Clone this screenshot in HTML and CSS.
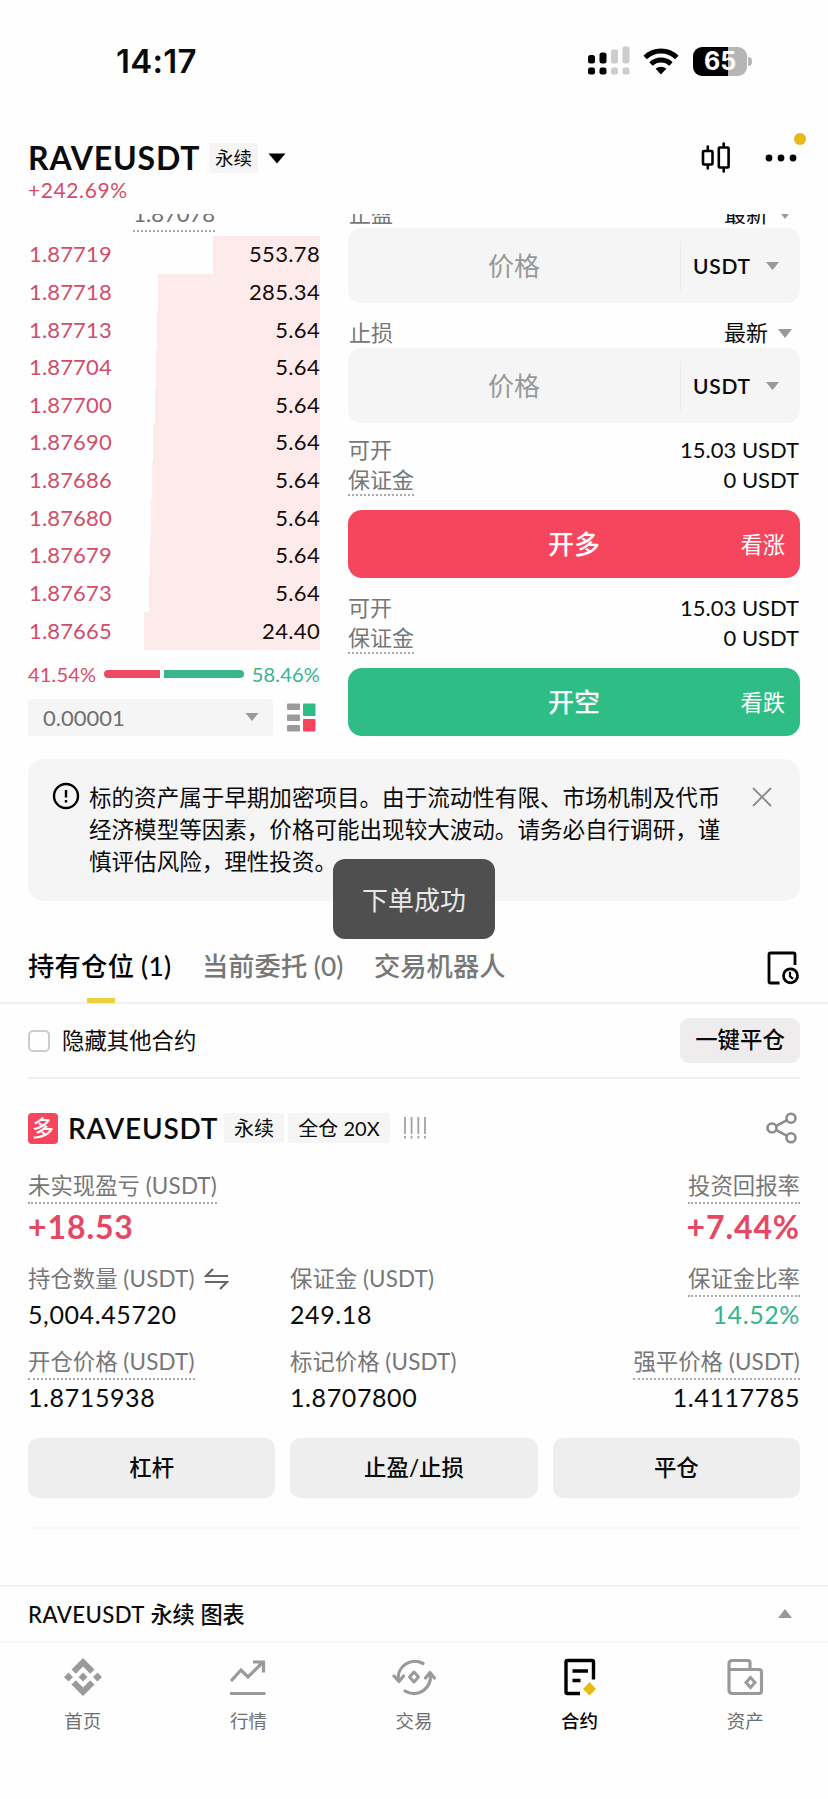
FILE: index.html
```
<!DOCTYPE html>
<html lang="zh-CN">
<head>
<meta charset="utf-8">
<title>RAVEUSDT 永续</title>
<link rel="stylesheet" href="styles.css">
</head>
<body>
<div class="screen">
  <div class="status">
    <span class="clock">14:17</span>
    <div class="status-icons">
      <svg class="signal" width="42" height="30" viewBox="0 0 42 30">
        <g fill="#000"><rect x="0" y="9" width="7" height="8.500" rx="2.500"/><rect x="11.500" y="6.500" width="7" height="11" rx="2.500"/><rect x="0" y="21.500" width="7" height="7" rx="2.200"/><rect x="11.500" y="21.500" width="7" height="7" rx="2.200"/></g>
        <g fill="#ccc"><rect x="23" y="3.500" width="7" height="14" rx="2"/><rect x="34.500" y="0.500" width="7" height="17" rx="2"/><rect x="23" y="21.500" width="7" height="7" rx="2.200"/><rect x="34.500" y="21.500" width="7" height="7" rx="2.200"/></g>
      </svg>
      <svg class="wifi" width="36" height="28" viewBox="0 0 36 28">
        <path d="M2.200 10.500A22.500 22.500 0 0 1 33.800 10.500" fill="none" stroke="#000" stroke-width="5"/>
        <path d="M8 17A14.500 14.500 0 0 1 28 17" fill="none" stroke="#000" stroke-width="4.800"/>
        <path d="M18 27.500L12.600 21.800A8 8 0 0 1 23.400 21.800Z" fill="#000"/>
      </svg>
      <div class="battery"><span class="level">65</span><i class="nub"></i></div>
    </div>
  </div>

  <header class="top">
    <div class="top-row">
      <h1 class="symbol">RAVEUSDT</h1>
      <span class="tag tag-top">永续</span>
      <svg class="top-caret" width="18" height="11" viewBox="0 0 18 11"><path d="M.5.5H17.500L9 10.500Z" fill="#000"/></svg>
      <svg class="candles" width="30" height="32" viewBox="0 0 30 32" fill="none" stroke="#000" stroke-width="2.600" stroke-linecap="round">
        <rect x="2" y="9" width="9.500" height="13.500" rx="1"/><path d="M6.800 4.500V8M6.800 23.500V26.500"/>
        <rect x="17.800" y="5.500" width="9.800" height="20" rx="1"/><path d="M22.700 1.500V4.500M22.700 26.500V29.500"/>
      </svg>
      <div class="more">
        <svg width="32" height="8" viewBox="0 0 32 8"><circle cx="4" cy="4" r="3.400"/><circle cx="16" cy="4" r="3.400"/><circle cx="28" cy="4" r="3.400"/></svg>
        <i class="dot"></i>
      </div>
    </div>
    <div class="change">+242.69%</div>
  </header>

  <main class="trade">
    <section class="book">
      <div class="mark-clip"><span class="mark">1.87078</span></div>
      <div class="asks">
        <div class="ask"><i class="depth" style="width:107px"></i><span>1.87719</span><b>553.78</b></div>
        <div class="ask"><i class="depth" style="width:162px"></i><span>1.87718</span><b>285.34</b></div>
        <div class="ask"><i class="depth" style="width:163px"></i><span>1.87713</span><b>5.64</b></div>
        <div class="ask"><i class="depth" style="width:164px"></i><span>1.87704</span><b>5.64</b></div>
        <div class="ask"><i class="depth" style="width:165px"></i><span>1.87700</span><b>5.64</b></div>
        <div class="ask"><i class="depth" style="width:167px"></i><span>1.87690</span><b>5.64</b></div>
        <div class="ask"><i class="depth" style="width:168px"></i><span>1.87686</span><b>5.64</b></div>
        <div class="ask"><i class="depth" style="width:169px"></i><span>1.87680</span><b>5.64</b></div>
        <div class="ask"><i class="depth" style="width:170px"></i><span>1.87679</span><b>5.64</b></div>
        <div class="ask"><i class="depth" style="width:171px"></i><span>1.87673</span><b>5.64</b></div>
        <div class="ask"><i class="depth" style="width:176px"></i><span>1.87665</span><b>24.40</b></div>
      </div>
      <div class="ratio">
        <span class="red">41.54%</span>
        <div class="ratio-bar"><i class="r" style="width:56px"></i><i class="g"></i></div>
        <span class="green">58.46%</span>
      </div>
      <div class="precision">
        <div class="step"><span>0.00001</span><svg width="14" height="8" viewBox="0 0 14 8"><path d="M.5 0H13.500L7 8Z" fill="#999"/></svg></div>
        <svg class="layout-icon" width="29" height="29" viewBox="0 0 29 29">
          <g fill="#9b9b9b"><rect x="0" y="0.500" width="13" height="6.500" rx="1"/><rect x="0" y="11.500" width="13" height="6.500" rx="1"/><rect x="0" y="22" width="13" height="6.500" rx="1"/></g>
          <rect x="16" y="0.500" width="12.500" height="12.500" rx="1" fill="#2ebd85"/><rect x="16" y="16" width="12.500" height="12.500" rx="1" fill="#f6465d"/>
        </svg>
      </div>
    </section>

    <section class="form">
      <div class="tp-clip"><div class="opt"><span class="lbl">止盈</span><span class="sel">最新</span><svg width="14" height="9" viewBox="0 0 14 9"><path d="M0 0H14L7 9Z" fill="#999"/></svg></div></div>
      <div class="field"><span class="ph">价格</span><span class="unit">USDT</span><svg width="13" height="8" viewBox="0 0 13 8"><path d="M0 0H13L6.500 8Z" fill="#999"/></svg></div>
      <div class="opt opt-sl"><span class="lbl">止损</span><span class="sel">最新</span><svg width="14" height="9" viewBox="0 0 14 9"><path d="M0 0H14L7 9Z" fill="#999"/></svg></div>
      <div class="field"><span class="ph">价格</span><span class="unit">USDT</span><svg width="13" height="8" viewBox="0 0 13 8"><path d="M0 0H13L6.500 8Z" fill="#999"/></svg></div>
      <div class="avail">
        <div class="line"><span>可开</span><b>15.03 USDT</b></div>
        <div class="line"><span class="dotted">保证金</span><b>0 USDT</b></div>
      </div>
      <div class="btn long"><span class="act">开多</span><span class="hint">看涨</span></div>
      <div class="avail avail-short">
        <div class="line"><span>可开</span><b>15.03 USDT</b></div>
        <div class="line"><span class="dotted">保证金</span><b>0 USDT</b></div>
      </div>
      <div class="btn short"><span class="act">开空</span><span class="hint">看跌</span></div>
    </section>
  </main>

  <div class="notice">
    <svg class="warn" width="28" height="28" viewBox="0 0 28 28" fill="none" stroke="#000"><circle cx="14" cy="14" r="12" stroke-width="2.400"/><path d="M14 8V15.500M14 18V20.500" stroke-width="2.400"/></svg>
    <p>标的资产属于早期加密项目。由于流动性有限、市场机制及代币<br>经济模型等因素，价格可能出现较大波动。请务必自行调研，谨<br>慎评估风险，理性投资。</p>
    <svg class="close" width="20" height="20" viewBox="0 0 20 20" fill="none" stroke="#8a8a8a" stroke-width="1.800"><path d="M1 1L19 19M19 1L1 19"/></svg>
    <div class="toast">下单成功</div>
  </div>

  <nav class="tabs">
    <span class="tab on">持有仓位 (1)</span>
    <span class="tab tab-orders">当前委托 (0)</span>
    <span class="tab tab-bots">交易机器人</span>
    <svg class="history" width="32" height="34" viewBox="0 0 32 34" fill="none" stroke="#000" stroke-width="2.800"><path d="M12.500 32H3.500Q2 32 2 30.500V3.500Q2 2 3.500 2H26.500Q28 2 28 3.500V14" /><circle cx="23.500" cy="24.800" r="7"/><path d="M23 20.800V25.300L26 27.800" stroke-width="2.200"/></svg>
  </nav>

  <div class="filter">
    <i class="check"></i><span class="filter-label">隐藏其他合约</span><span class="close-all">一键平仓</span>
  </div>

  <section class="position">
    <div class="pos-head">
      <span class="side">多</span>
      <h2>RAVEUSDT</h2>
      <span class="tag tag-perp">永续</span>
      <span class="tag tag-lev">全仓 20X</span>
      <svg class="risk" width="24" height="24" viewBox="0 0 24 24" stroke="#a3a3a3" stroke-width="1.800"><path d="M2 1V18M8.600 1V18M15.300 1V18M22 1V18M2 20V22.500M8.600 20V22.500M15.300 20V22.500M22 20V22.500"/></svg>
      <svg class="share" width="32" height="32" viewBox="0 0 32 32" fill="none" stroke="#8c8c8c" stroke-width="2.600"><circle cx="6" cy="16" r="4.500"/><circle cx="25" cy="6.200" r="4.500"/><circle cx="25" cy="25.800" r="4.500"/><path d="M10.300 13.800L20.700 8.400M10.300 18.200L20.700 23.600"/></svg>
    </div>
    <div class="grid pnl">
      <div><span class="k dotted">未实现盈亏 <em>(USDT)</em></span><strong>+18.53</strong></div>
      <div class="right"><span class="k dotted">投资回报率</span><strong>+7.44%</strong></div>
    </div>
    <div class="grid three">
      <div><span class="k">持仓数量 <em>(USDT)</em><svg class="swap" width="25" height="22" viewBox="0 0 25 22" fill="none" stroke="#666" stroke-width="2.200"><path d="M24 8H2L9 1M1 14H23L16 21"/></svg></span><span class="v">5,004.45720</span></div>
      <div><span class="k">保证金 <em>(USDT)</em></span><span class="v">249.18</span></div>
      <div class="right"><span class="k dotted">保证金比率</span><span class="v green">14.52%</span></div>
    </div>
    <div class="grid three last">
      <div><span class="k dotted">开仓价格 <em>(USDT)</em></span><span class="v">1.8715938</span></div>
      <div><span class="k">标记价格 <em>(USDT)</em></span><span class="v">1.8707800</span></div>
      <div class="right"><span class="k dotted">强平价格 <em>(USDT)</em></span><span class="v">1.4117785</span></div>
    </div>
    <div class="actions"><span>杠杆</span><span>止盈/止损</span><span>平仓</span></div>
  </section>

  <div class="chart-bar"><span><em>RAVEUSDT</em> 永续 图表</span><svg width="14" height="9" viewBox="0 0 14 9"><path d="M0 9H14L7 0Z" fill="#999"/></svg></div>

  <footer class="nav">
    <div class="item"><svg width="40" height="40" viewBox="0 0 40 40" fill="#9a9a9a"><path d="M20 1L31.500 12.500L27.200 16.800L20 9.600L12.800 16.800L8.500 12.500Z"/><path d="M20 39L31.500 27.500L27.200 23.200L20 30.400L12.800 23.200L8.500 27.500Z"/><path d="M20 15.500L24.500 20L20 24.500L15.500 20ZM5.500 15.500L10 20L5.500 24.500L1 20ZM34.500 15.500L39 20L34.500 24.500L30 20Z"/></svg><span>首页</span></div>
    <div class="item"><svg width="40" height="40" viewBox="0 0 40 40" fill="none" stroke="#9a9a9a" stroke-width="3.200"><path d="M3 24L13 13L20 20L34 6M25 5H35.500V15.500M2 36.500H37.500"/></svg><span>行情</span></div>
    <div class="item"><svg width="44" height="40" viewBox="0 0 44 40" fill="none" stroke="#9a9a9a" stroke-width="3.200" stroke-linecap="round" stroke-linejoin="round"><path d="M31 6.500A16.500 16.500 0 0 0 6.500 23.500M2 19L7 24.500L11.500 19M13 34A16.500 16.500 0 0 0 38 16.500M33.500 21L38 15.500L42.500 21"/><path d="M22 15L26.500 20L22 25L17.500 20Z" stroke-width="3"/></svg><span>交易</span></div>
    <div class="item on"><svg width="40" height="40" viewBox="0 0 40 40" fill="none" stroke="#000" stroke-width="3.400"><path d="M20 36.500H7.500Q6 36.500 6 35V5Q6 3.500 7.500 3.500H32Q33.500 3.500 33.500 5V22.500M12.500 14H28M12.500 23.500H20.500"/><path d="M29.500 25L36 32L29.500 38.500L23 32Z" fill="#e9b90b" stroke="none"/></svg><span>合约</span></div>
    <div class="item"><svg width="40" height="40" viewBox="0 0 40 40" fill="none" stroke="#9a9a9a" stroke-width="3.200"><path d="M4 12.500V33Q4 36.500 7.500 36.500H34Q36.500 36.500 36.500 34V15Q36.500 12.500 34 12.500H4ZM4 12.500V7Q4 3.500 7.500 3.500H23Q25 3.500 25 5.500V12"/><path d="M25.500 20.500L30 25.500L25.500 30.500L21 25.500Z" stroke-width="3"/></svg><span>资产</span></div>
  </footer>
</div>
</body>
</html>
```
FILE: styles.css
```
* { box-sizing: border-box; }
body { margin: 0; background: #fefefe; color: #0b0b0b; font-family: Lato, "Noto Sans CJK SC", sans-serif; }
.screen { width: 828px; height: 1799px; overflow: hidden; }
svg { display: block; flex: none; }
h1, h2, p { margin: 0; }
b { font-weight: 400; }
em { font-style: normal; }
.red { color: #e04c66; }
.green { color: #36b58a; }

.status { height: 122px; padding: 0 76px 0 116px; display: flex; align-items: center; justify-content: space-between; }
.clock { font: 600 33px/40px Inter, sans-serif; letter-spacing: 0.3px; }
.status-icons { display: flex; align-items: center; }
.wifi { margin-left: 13px; }
.battery { margin-left: 14px; display: flex; align-items: center; }
.level { width: 54px; height: 29px; border-radius: 9px; background: linear-gradient(90deg, #000 65%, #b5b5b5 65%); color: #fff; font: 700 25px/29px Inter, sans-serif; text-align: center; }
.nub { width: 4px; height: 9px; margin-left: 1px; border-radius: 0 4px 4px 0; background: #b5b5b5; }

.top { height: 92px; padding: 19px 29px 0 28px; }
.top-row { height: 34px; display: flex; align-items: center; }
.symbol { width: 181px; font-size: 32px; line-height: 34px; font-weight: 700; letter-spacing: 0.85px; }
.tag { background: #f5f5f5; border-radius: 3px; text-align: center; white-space: nowrap; }
.tag-top { width: 49px; font-size: 18.500px; line-height: 30px; }
.top-caret { margin-left: 10px; }
.candles { margin-left: auto; }
.more { position: relative; margin: 0 2px 0 34px; }
.dot { position: absolute; right: -9px; top: -21px; width: 12px; height: 12px; border-radius: 50%; background: #eab714; }
.change { margin-top: 1px; font-size: 21px; line-height: 28px; letter-spacing: 0.6px; color: #d64c68; }

.trade { display: flex; padding: 0 28px; height: 522px; }
.book { width: 292px; }
.mark-clip { height: 22px; display: flex; align-items: flex-end; justify-content: flex-end; overflow: hidden; padding-right: 105px; }
.mark { flex: none; font-size: 22px; line-height: 27px; color: #6f6f6f; border-bottom: 2px dotted #aaa; height: 32px; margin-bottom: 4px; }
.asks { font-size: 22px; }
.ask { position: relative; height: 37.640px; display: flex; align-items: center; justify-content: space-between; color: #d24d69; padding: 0 0 2px 1px; letter-spacing: 0.15px; }
.ask b { position: relative; color: #150a0a; letter-spacing: 0.35px; }
.depth { position: absolute; right: 0; top: 0; bottom: 0; background: #fdebec; }
.ratio { height: 49px; display: flex; align-items: center; justify-content: space-between; font-size: 20px; letter-spacing: 0.2px; }
.ratio-bar { width: 140px; height: 8px; display: flex; gap: 4px; }
.r { background: #ee4a63; border-radius: 4px 0 0 4px; }
.g { flex: 1; background: #38b78a; border-radius: 0 4px 4px 0; }
.precision { display: flex; align-items: center; height: 37px; }
.step { width: 245px; height: 37px; padding: 0 14px 0 15px; display: flex; align-items: center; justify-content: space-between; background: #f5f5f5; border-radius: 4px; font-size: 22px; color: #6f6f6f; }
.layout-icon { margin-left: 14px; }

.form { width: 452px; margin-left: 28px; }
.tp-clip { height: 14px; overflow: hidden; display: flex; align-items: flex-end; }
.opt { width: 452px; display: flex; align-items: center; height: 30px; flex: none; font-size: 22px; line-height: 30px; }
.tp-clip .opt { margin-bottom: -1px; }
.lbl { flex: 1; padding-left: 1px; color: #777; }
.opt svg { margin: 0 8px 0 10px; }
.opt-sl { height: 45px; padding-top: 15px; }
.field { height: 75px; display: flex; align-items: center; background: #f5f5f5; border-radius: 13px; }
.ph { width: 333px; line-height: 50px; text-align: center; font-size: 26px; color: #999; border-right: 1px solid #ececec; }
.unit { width: 72px; padding-left: 12px; font-size: 21px; font-weight: 600; letter-spacing: 0.7px; }
.field svg { margin-left: 13px; }
.avail { height: 87px; padding-top: 12px; }
.avail-short { height: 90px; padding-top: 15px; }
.line { display: flex; height: 30px; justify-content: space-between; font-size: 22px; line-height: 30px; }
.line span { color: #777; }
.line b { padding-right: 1px; }
.dotted { border-bottom: 2px dotted #aaa; }
.line .dotted { height: 31px; }
.btn { height: 68px; border-radius: 14px; display: grid; grid-template-columns: 1fr auto 1fr; align-items: center; padding: 0 15px 3px; color: #fff; }
.act { grid-column: 2; font-size: 26px; font-weight: 500; }
.hint { justify-self: end; font-size: 22.300px; }
.long { background: #f6465d; }
.short { background: #2ebd85; }

.notice { position: relative; margin: 23px 28px 0; height: 142px; border-radius: 16px; background: #f5f5f5; display: flex; padding: 23px 28px 0 24px; }
.notice p { margin-left: 9px; width: 640px; font-size: 22.550px; line-height: 32px; white-space: nowrap; }
.close { margin: 5px 0 0 auto; }
.toast { position: absolute; left: 305px; top: 100px; width: 162px; height: 80px; border-radius: 12px; background: #4f4f4f; color: #e8e8e8; font-size: 26px; line-height: 83px; text-align: center; }

.tabs { margin-top: 32px; height: 71px; padding: 0 28px; display: flex; align-items: flex-start; border-bottom: 2px solid #f0f0f0; font-size: 26.300px; line-height: 67px; font-weight: 500; color: #777; }
.tab.on { position: relative; width: 174px; color: #000; letter-spacing: 0.25px; }
.tab.on::after { content: ""; position: absolute; left: 59px; bottom: -3px; width: 28px; height: 5px; background: #f0cf3c; }
.tab-orders { width: 172px; }
.history { margin: 18px 1px 0 auto; }

.filter { margin: 0 28px; height: 75px; display: flex; align-items: center; border-bottom: 2px solid #eee; font-size: 22.400px; }
.check { width: 22px; height: 22px; border: 2px solid #ccc; border-radius: 5px; }
.filter-label { flex: 1; padding: 0 0 3px 12px; }
.close-all { width: 120px; height: 45px; border-radius: 9px; background: #eeecec; text-align: center; line-height: 44px; font-weight: 500; }

.position { margin: 0 28px; height: 450px; border-bottom: 2px solid #f8f8f8; padding-top: 33px; }
.pos-head { height: 32px; display: flex; align-items: center; }
.side { width: 30px; height: 31px; border-radius: 4px; background: #f6465d; color: #fff; font-size: 22px; line-height: 29px; font-weight: 500; text-align: center; }
.pos-head h2 { margin-left: 10px; width: 156px; font-size: 28px; line-height: 34px; font-weight: 600; letter-spacing: 0.8px; }
.tag-perp { width: 60px; font-size: 20px; line-height: 30px; }
.tag-lev { width: 102px; margin-left: 4px; font-size: 20px; line-height: 30px; }
.risk { margin-left: 13px; }
.share { margin: 0 2px 0 auto; }
.grid { display: grid; }
.grid > div { display: flex; flex-direction: column; align-items: flex-start; }
.grid > .right { align-items: flex-end; }
.k { display: flex; height: 36px; font-size: 22.400px; line-height: 36px; color: #777; white-space: pre; }
.k em { letter-spacing: 0.2px; }
.pnl { grid-template-columns: 1fr 1fr; margin-top: 24px; height: 93px; }
.pnl strong { font-size: 32px; line-height: 45px; font-weight: 700; letter-spacing: 0.9px; color: #e54862; }
.three { grid-template-columns: 262px 262px 1fr; height: 83px; }
.v { font-size: 25px; line-height: 35px; letter-spacing: 0.6px; }
.swap { margin: 7px 0 0 9px; }
.actions { margin-top: 11px; display: grid; grid-template-columns: repeat(3, 1fr); gap: 15px; }
.actions span { height: 60px; border-radius: 10px; background: #eee; font-size: 22.400px; font-weight: 500; line-height: 59px; text-align: center; }

.chart-bar { margin-top: 56px; height: 58px; border-top: 2px solid #f0f0f0; border-bottom: 2px solid #f8f8f8; padding: 0 36px 2px 28px; display: flex; align-items: center; justify-content: space-between; font-size: 22.200px; font-weight: 500; }
.chart-bar em { letter-spacing: 0.4px; }
.nav { display: flex; padding-top: 14px; }
.item { flex: 1; display: flex; flex-direction: column; align-items: center; font-size: 18.500px; line-height: 26px; color: #6f6f6f; }
.item span { margin-top: 11px; }
.item.on { color: #000; font-weight: 500; }
```
